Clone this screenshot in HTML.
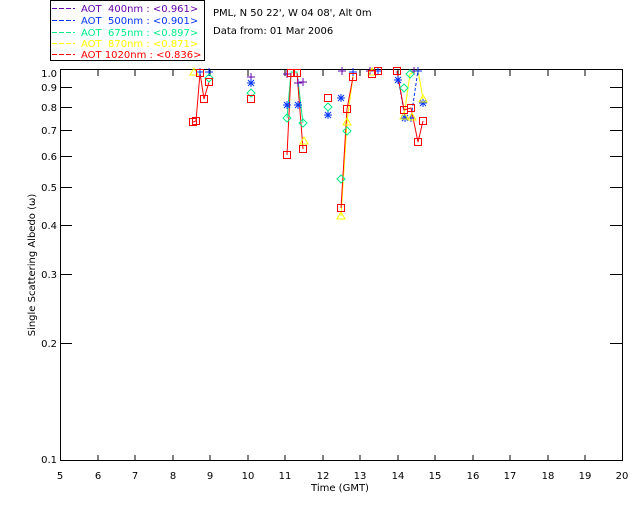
<!DOCTYPE html>
<html><head><meta charset="utf-8"><style>
html,body{margin:0;padding:0;background:#fff;width:640px;height:512px;overflow:hidden}
svg text{font-family:"DejaVu Sans","Liberation Sans",sans-serif;font-size:10px}
</style></head><body>
<svg width="640" height="512" xmlns="http://www.w3.org/2000/svg" shape-rendering="crispEdges">
<rect x="50.5" y="0.5" width="154" height="60" fill="none" stroke="#000"/>
<g stroke-width="1" stroke-dasharray="5,2">
<line x1="52" y1="8.5" x2="75" y2="8.5" stroke="#6600aa"/>
<line x1="52" y1="20.5" x2="75" y2="20.5" stroke="#0033ff"/>
<line x1="52" y1="32.5" x2="75" y2="32.5" stroke="#00ee88"/>
<line x1="52" y1="43.5" x2="75" y2="43.5" stroke="#ffff00"/>
<line x1="52" y1="54.5" x2="75" y2="54.5" stroke="#ff0000"/>
</g>
<text x="81" y="12" fill="#6600aa" xml:space="preserve">AOT  400nm : &lt;0.961&gt;</text>
<text x="81" y="24" fill="#0033ff" xml:space="preserve">AOT  500nm : &lt;0.901&gt;</text>
<text x="81" y="36" fill="#00ee88" xml:space="preserve">AOT  675nm : &lt;0.897&gt;</text>
<text x="81" y="47" fill="#ffff00" xml:space="preserve">AOT  870nm : &lt;0.871&gt;</text>
<text x="81" y="58" fill="#ff0000" xml:space="preserve">AOT 1020nm : &lt;0.836&gt;</text>
<text x="213" y="16">PML, N 50 22', W 04 08', Alt 0m</text>
<text x="213" y="34">Data from: 01 Mar 2006</text>
<rect x="60.5" y="69.5" width="562" height="391" fill="none" stroke="#000"/>
<g stroke="#000">
<path d="M98,461v-6M135,461v-6M173,461v-6M210,461v-6M248,461v-6M285,461v-6M323,461v-6M360,461v-6M398,461v-6M435,461v-6M473,461v-6M510,461v-6M548,461v-6M585,461v-6"/>
<path d="M98,70v6M135,70v6M173,70v6M210,70v6M248,70v6M285,70v6M323,70v6M360,70v6M398,70v6M435,70v6M473,70v6M510,70v6M548,70v6M585,70v6"/>
<path d="M60,87.5h12M60,107.5h12M60,130.5h12M60,156.5h12M60,187.5h12M60,225.5h12M60,274.5h12M60,343.5h12"/>
<path d="M622,87.5h-12M622,107.5h-12M622,130.5h-12M622,156.5h-12M622,187.5h-12M622,225.5h-12M622,274.5h-12M622,343.5h-12"/>
</g>
<g text-anchor="end">
<text x="57" y="77">1.0</text><text x="57" y="91">0.9</text><text x="57" y="111">0.8</text><text x="57" y="134">0.7</text><text x="57" y="160">0.6</text><text x="57" y="191">0.5</text><text x="57" y="229">0.4</text><text x="57" y="278">0.3</text><text x="57" y="347">0.2</text><text x="57" y="463">0.1</text>
</g>
<g text-anchor="middle">
<text x="60" y="479">5</text><text x="98" y="479">6</text><text x="135" y="479">7</text><text x="173" y="479">8</text><text x="210" y="479">9</text><text x="248" y="479">10</text><text x="285" y="479">11</text><text x="323" y="479">12</text><text x="360" y="479">13</text><text x="398" y="479">14</text><text x="435" y="479">15</text><text x="473" y="479">16</text><text x="510" y="479">17</text><text x="548" y="479">18</text><text x="585" y="479">19</text><text x="622" y="479">20</text>
<text x="340" y="491">Time (GMT)</text>
<text transform="translate(35,265) rotate(-90)">Single Scattering Albedo (ω)</text>
</g>
<g fill="none" shape-rendering="auto">
<polyline stroke="#00ee88" points="287,118 291,72 297,72 303,123"/>
<polyline stroke="#ffff00" points="341,216 347,122 353,76"/>
<polyline stroke="#ffff00" points="404,116 410,74 418,70 423,99"/>
<polyline stroke="#0033ff" stroke-dasharray="3,2" points="397,72 405,118 411,118 418,70"/>
<polyline stroke="#ff0000" points="193,122 196,121 200,73 204,99 209,82"/>
<polyline stroke="#ff0000" points="287,155 291,73"/>
<polyline stroke="#ff0000" points="297,73 303,149"/>
<polyline stroke="#ff0000" points="341,208 347,109 353,77"/>
<polyline stroke="#ff0000" points="397,71 404,110 411,108 418,142 423,121"/>
<g stroke="#6600aa"><path d="M247,77h8M251,73v8M283,74h8M287,70v8M294,83h8M298,79v8M299,82h8M303,78v8M338,71h8M342,67v8M366,71h8M370,67v8M410,71h8M414,67v8"/></g>
<g stroke="#0033ff"><path d="M247,83h8M251,79v8M248,80l6,6M254,80l-6,6M283,105h8M287,101v8M284,102l6,6M290,102l-6,6M294,105h8M298,101v8M295,102l6,6M301,102l-6,6M324,115h8M328,111v8M325,112l6,6M331,112l-6,6M337,98h8M341,94v8M338,95l6,6M344,95l-6,6M394,80h8M398,76v8M395,77l6,6M401,77l-6,6M401,118h8M405,114v8M402,115l6,6M408,115l-6,6M407,118h8M411,114v8M419,103h8M423,99v8M420,100l6,6M426,100l-6,6M205,72h8M209,68v8M196,72h8M200,68v8M349,72h8M353,68v8M374,71h8M378,67v8M414,71h8M418,67v8"/></g>
<g stroke="#00ee88"><path d="M251,89l4,4l-4,4l-4,-4zM287,114l4,4l-4,4l-4,-4zM303,119l4,4l-4,4l-4,-4zM328,103l4,4l-4,4l-4,-4zM341,175l4,4l-4,4l-4,-4zM347,127l4,4l-4,4l-4,-4zM404,84l4,4l-4,4l-4,-4zM209,74l4,4l-4,4l-4,-4zM410,70l4,4l-4,4l-4,-4z"/></g>
<g stroke="#ffff00"><path d="M341,212l4,7h-8zM347,118l4,7h-8zM304,137l4,7h-8zM404,112l4,7h-8zM412,113l4,7h-8zM423,95l4,7h-8zM194,68l4,7h-8zM372,68l4,7h-8z"/></g>
<g stroke="#ff0000"><path d="M189.5,118.5h7v7h-7zM192.5,117.5h7v7h-7zM196.5,69.5h7v7h-7zM200.5,95.5h7v7h-7zM205.5,78.5h7v7h-7zM247.5,95.5h7v7h-7zM283.5,151.5h7v7h-7zM287.5,69.5h7v7h-7zM293.5,69.5h7v7h-7zM299.5,145.5h7v7h-7zM324.5,94.5h7v7h-7zM337.5,204.5h7v7h-7zM343.5,105.5h7v7h-7zM349.5,73.5h7v7h-7zM368.5,70.5h7v7h-7zM374.5,67.5h7v7h-7zM393.5,67.5h7v7h-7zM400.5,106.5h7v7h-7zM407.5,104.5h7v7h-7zM414.5,138.5h7v7h-7zM419.5,117.5h7v7h-7z"/></g>
</g>
</svg>
</body></html>
